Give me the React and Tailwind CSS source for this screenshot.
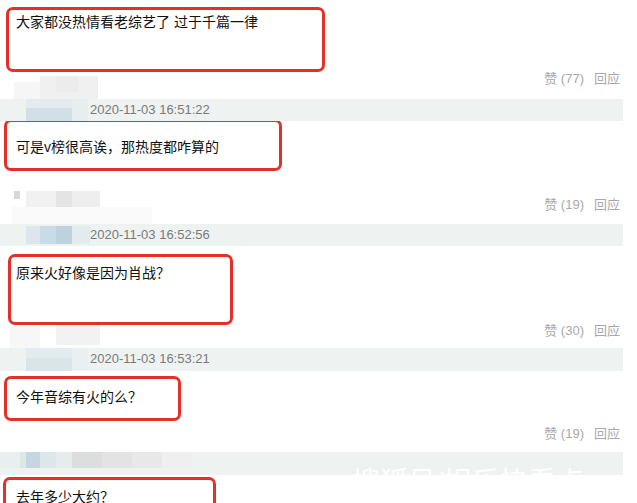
const font = { fontFamily: '"Liberation Sans", "Noto Sans CJK SC", sans-serif' }

function Box({ className, textClass, children }) {
  return (
    <div
      className={`rounded-[7px] border-[3px] border-[#e5302a] bg-white text-[14px] leading-[16px] text-[#111] ${className}`}
    >
      <div className={textClass}>{children}</div>
    </div>
  )
}

function Actions({ likes, className }) {
  return (
    <div className={`flex h-[14px] items-center justify-end pr-[17px] text-[13px] leading-[14px] text-[#a8a8a8] ${className}`}>
      <span>赞 ({likes})</span>
      <span className="ml-[10px]">回应</span>
    </div>
  )
}

function Band({ time, className, children }) {
  return (
    <div className={`relative w-[623px] bg-[#eef3f2] ${className}`}>
      {children}
      {time ? (
        <div className="relative pl-[90px] text-[13px] leading-[22px] text-[#7a7a7a]">{time}</div>
      ) : null}
    </div>
  )
}

function Mosaic({ blocks }) {
  return (
    <>
      {blocks.map((b, i) => (
        <div
          key={i}
          className="absolute"
          style={{ left: b[0], top: b[1], width: b[2], height: b[3], background: b[4] }}
        />
      ))}
    </>
  )
}

export default function App() {
  return (
    <div className="relative h-[503px] w-[637px] overflow-hidden bg-white" style={font}>
      <div className="flex flex-col">
        <Box className="ml-[6px] mt-[7px] h-[65px] w-[319px]" textClass="pl-[7px] pt-[4px]">
          大家都没热情看老综艺了 过于千篇一律
        </Box>
        <div className="relative">
          <Mosaic
            blocks={[
              [14, 10, 26, 22, '#f6f6f6'],
              [40, 4, 58, 26, '#f0f0f0'],
              [56, 4, 22, 16, '#ececec'],
              [20, 32, 10, 14, '#f3f6f7'],
            ]}
          />
          <Actions likes="77" className="relative" />
          <Band time="2020-11-03 16:51:22" className="mt-[13px] h-[22px]">
            <Mosaic
              blocks={[
                [26, 0, 46, 14, '#e3ebee'],
                [26, 9, 46, 13, '#d2dfe7'],
                [72, 0, 16, 22, '#e8eef0'],
              ]}
            />
          </Band>
        </div>

        <Box className="ml-[4px] mt-[-2px] h-[52px] w-[278px]" textClass="pl-[9px] pt-[17px]">
          可是v榜很高诶，那热度都咋算的
        </Box>
        <div className="relative">
          <Mosaic
            blocks={[
              [14, 20, 6, 8, '#d8d8d8'],
              [26, 20, 30, 16, '#f1f1f1'],
              [56, 20, 16, 16, '#e4e4e4'],
              [72, 20, 28, 16, '#eeeeee'],
              [12, 36, 140, 18, '#fafafa'],
            ]}
          />
          <Actions likes="19" className="relative mt-[27px]" />
          <Band time="2020-11-03 16:52:56" className="mt-[12px] h-[22px]">
            <Mosaic
              blocks={[
                [26, 2, 14, 18, '#dde6ec'],
                [40, 2, 30, 18, '#c9dbe6'],
                [56, 2, 16, 18, '#bed2de'],
                [72, 2, 18, 18, '#e3ebee'],
              ]}
            />
          </Band>
        </div>

        <Box className="ml-[8px] mt-[8px] h-[71px] w-[225px]" textClass="pl-[5px] pt-[8px]">
          原来火好像是因为肖战？
        </Box>
        <div className="relative">
          <Mosaic
            blocks={[
              [10, 2, 30, 22, '#f7f7f7'],
              [56, 0, 44, 20, '#f2f2f2'],
            ]}
          />
          <Actions likes="30" className="relative mt-[-1px]" />
          <Band time="2020-11-03 16:53:21" className="mt-[10px] h-[23px]">
            <Mosaic
              blocks={[
                [26, 0, 46, 23, '#dae5ea'],
                [26, 0, 46, 10, '#e2ebee'],
                [72, 0, 16, 23, '#e9f0f1'],
              ]}
            />
          </Band>
        </div>

        <Box className="ml-[4px] mt-[5px] h-[45px] w-[177px]" textClass="pl-[9px] pt-[10px]">
          今年音综有火的么？
        </Box>
        <Actions likes="19" className="mt-[6px]" />
        <Band className="mt-[11px] h-[23px] overflow-hidden">
          <Mosaic
            blocks={[
              [0, 0, 20, 16, '#e9eeee'],
              [20, 0, 14, 16, '#dfe6e8'],
              [26, 0, 14, 16, '#c6d6e0'],
              [40, 0, 16, 16, '#dde6ea'],
              [56, 0, 16, 16, '#e6ebec'],
              [72, 0, 30, 16, '#dcdedd'],
              [102, 0, 30, 16, '#e2e3e2'],
              [132, 0, 30, 16, '#e7e8e7'],
              [162, 0, 30, 16, '#eeefee'],
            ]}
          />
          <div className="absolute left-[352px] top-[16px] whitespace-nowrap text-[28px] leading-[30px] text-white/90">
            搜狐号/娱乐快看点
          </div>
        </Band>

        <Box className="ml-[3px] mt-[2px] h-[40px] w-[213px]" textClass="pl-[10px] pt-[9px]">
          去年多少大约？
        </Box>
      </div>
    </div>
  )
}
